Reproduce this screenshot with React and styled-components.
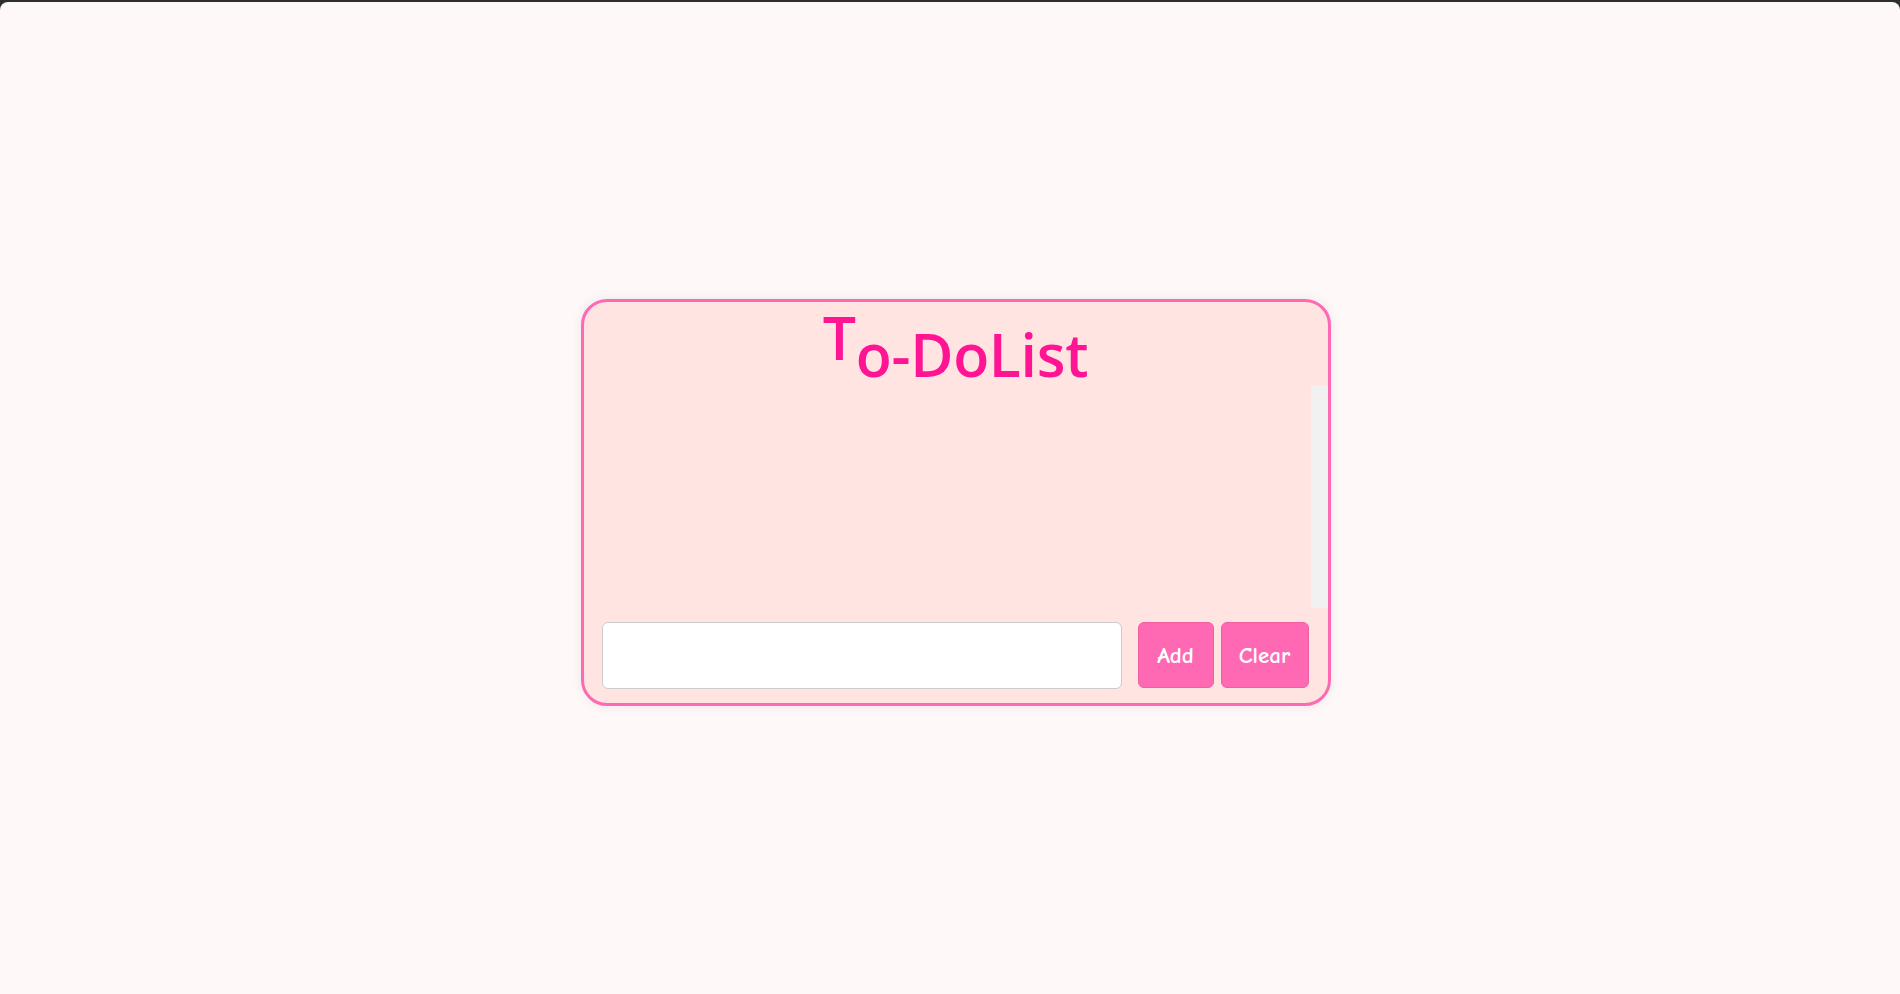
import React, { useState } from "react";
import styled, { createGlobalStyle } from "styled-components";

const GlobalStyle = createGlobalStyle`
  html, body {
    margin: 0;
    padding: 0;
    background: #2e2e2e;
  }
  * {
    box-sizing: border-box;
  }
`;

const Page = styled.div`
  margin-top: 2px;
  height: calc(100vh - 2px);
  background: #fff8f8;
  border-radius: 8px 8px 0 0;
  display: flex;
  align-items: center;
  justify-content: center;
  padding: 8px 0 0 11px;
`;

const Card = styled.div`
  width: 750px;
  height: 407px;
  background: #ffe4e1;
  border: 3px solid #ff69b4;
  border-radius: 26px;
  box-shadow: 0 0 12px rgba(0, 0, 0, 0.08);
  display: flex;
  flex-direction: column;
  overflow: hidden;
`;

const Title = styled.h1`
  margin: 0;
  display: flex;
  justify-content: center;
  align-items: flex-start;
  padding-top: 3px;
  font-family: "Open Sans", "Noto Sans", sans-serif;
  font-weight: 600;
  font-size: 59px;
  line-height: 1.1;
  color: #ff1493;
  letter-spacing: -0.3px;
`;

const Rest = styled.span`
  margin-top: 17px;
`;

const ListArea = styled.div`
  height: 222px;
  display: flex;
`;

const List = styled.ul`
  flex: 1;
  margin: 0;
  padding: 0;
  list-style: none;
  overflow-y: auto;
`;

const Track = styled.div`
  width: 17px;
  background: #f1f1f1;
`;

const Row = styled.div`
  display: flex;
  align-items: flex-start;
  padding: 14px 18px 0 18px;
`;

const Input = styled.input`
  width: 520px;
  height: 67px;
  background: #fff;
  border: 1px solid #ccc;
  border-radius: 6px;
  margin-right: 16px;
  font-size: 20px;
  padding: 0 12px;
  outline: none;
`;

const Button = styled.button`
  height: 66px;
  width: ${(p) => p.$w}px;
  margin-right: ${(p) => p.$gap || 0}px;
  background: #ff69b4;
  border: 1px solid #f0609f;
  border-radius: 6px;
  color: #fff;
  font-family: "Comic Sans MS", "Comic Neue", cursive;
  font-size: 23px;
  font-weight: 600;
  cursor: pointer;
  padding: 0;
`;

export default function App() {
  const [text, setText] = useState("");
  const [items, setItems] = useState([]);

  const add = () => {
    if (!text.trim()) return;
    setItems([...items, text]);
    setText("");
  };

  return (
    <>
      <GlobalStyle />
      <Page>
        <Card>
          <Title>
            <span>T</span>
            <Rest>o-DoList</Rest>
          </Title>
          <ListArea>
            <List>
              {items.map((it, i) => (
                <li key={i}>{it}</li>
              ))}
            </List>
            <Track />
          </ListArea>
          <Row>
            <Input value={text} onChange={(e) => setText(e.target.value)} />
            <Button $w={76} $gap={7} onClick={add}>
              Add
            </Button>
            <Button $w={88} onClick={() => setItems([])}>
              Clear
            </Button>
          </Row>
        </Card>
      </Page>
    </>
  );
}
